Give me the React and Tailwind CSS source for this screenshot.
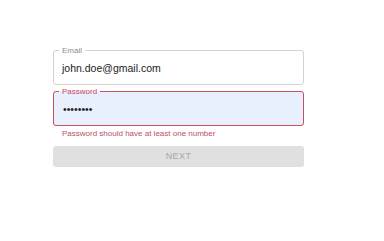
export default function App() {
  const font = { fontFamily: '"Liberation Sans", Arial, sans-serif' };
  return (
    <div className="w-[384px] h-[241px] bg-white" style={font}>
      <div className="pt-[46px] pl-[53px] w-[304px] flex flex-col">
        <fieldset className="block h-[39px] border border-[#d3d3d3] rounded-[3px] pl-[5px] pr-[4px] m-0">
          <legend className="text-[8px] leading-[9px] text-[#8c8c8c] px-[3px]">Email</legend>
          <div className="text-[10.5px] leading-[12px] text-[#222] pl-[3px] pt-[7px]">john.doe@gmail.com</div>
        </fieldset>
        <fieldset className="block mt-[2px] h-[39px] border border-[#c9505f] rounded-[3px] pl-[5px] pr-[4px] m-0 bg-[#e8f0fe]">
          <legend className="text-[8px] leading-[9px] text-[#c94a5b] px-[3px]">Password</legend>
          <div className="text-[10.5px] leading-[12px] text-[#222] pl-[4px] pt-[7px]">••••••••</div>
        </fieldset>
        <div className="text-[8px] leading-[10px] text-[#bd4f5e] pl-[9px] mt-[3px]">Password should have at least one number</div>
        <div className="mt-[7px] h-[21px] rounded-[3px] bg-[#e0e0e0] flex items-center justify-center text-[9px] tracking-[0.4px] text-[#a8a8a8]">NEXT</div>
      </div>
    </div>
  );
}
